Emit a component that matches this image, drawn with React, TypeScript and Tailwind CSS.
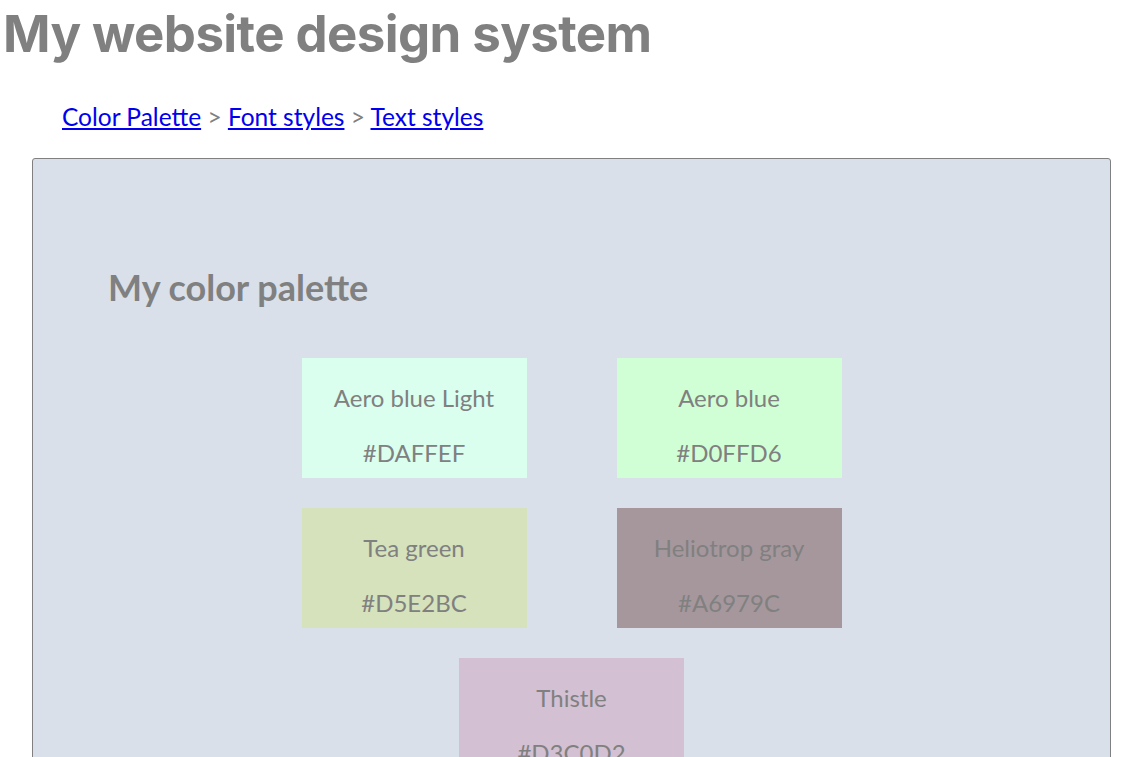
const swatches = [
  { name: "Aero blue Light", hex: "#DAFFEF", bg: "bg-[#daffef]" },
  { name: "Aero blue", hex: "#D0FFD6", bg: "bg-[#d0ffd6]" },
  { name: "Tea green", hex: "#D5E2BC", bg: "bg-[#d5e2bc]" },
  { name: "Heliotrop gray", hex: "#A6979C", bg: "bg-[#a6979c]" },
  { name: "Thistle", hex: "#D3C0D2", bg: "bg-[#d3c0d2]" },
];

const Swatch = ({ name, hex, bg }: { name: string; hex: string; bg: string }) => {
  return (
    <div className={`${bg} w-[225px] h-[120px] flex flex-col items-center text-[24px] leading-[30px] text-[#808080]`}>
      <p className="mt-[25px]">{name}</p>
      <p className="mt-[25px]">{hex}</p>
    </div>
  );
};

const App = () => {
  return (
    <div className="h-[757px] overflow-hidden bg-white font-['Lato',sans-serif] text-[#808080]">
      <h1 className="pl-[3px] pt-[4px] text-[51px] leading-[60px] font-bold tracking-[-0.6px] font-['Inter',sans-serif] text-[#808080]">
        My website design system
      </h1>
      <nav className="mt-[38px] pl-[62px] text-[24.5px] leading-[30px] text-[#808080]">
        <a href="#palette" className="text-[#0000ee] underline">Color Palette</a>
        <span> &gt; </span>
        <a href="#fonts" className="text-[#0000ee] underline">Font styles</a>
        <span> &gt; </span>
        <a href="#text" className="text-[#0000ee] underline">Text styles</a>
      </nav>
      <section id="palette" className="mt-[26px] ml-[32px] w-[1079px] border border-[#808080] rounded-[3px] bg-[#d9e0e9] px-[75px] pt-[108px] pb-[60px]">
        <h2 className="text-[36px] leading-[40px] font-bold text-[#808080]">My color palette</h2>
        <div className="mt-[51px] mx-auto max-w-[800px] flex flex-wrap justify-center gap-x-[90px] gap-y-[30px]">
          {swatches.map((s) => (
            <Swatch key={s.hex} {...s} />
          ))}
        </div>
      </section>
    </div>
  );
};

export default App;
